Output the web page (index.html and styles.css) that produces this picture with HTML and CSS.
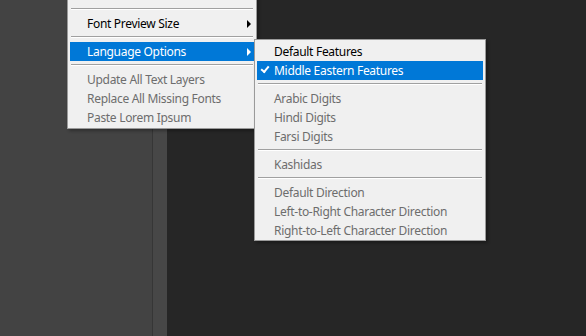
FILE: index.html
```html
<!DOCTYPE html>
<html>
  <head>
    <title>Type Menu</title>
    <meta charset="utf-8">
    <link rel="stylesheet" href="styles.css">
  </head>
  <body>
    <div class="desk">
      <div class="panel"></div>
      <div class="strip"></div>
      <div class="canvas"></div>
    </div>

    <!-- Type menu, scrolled so only the lower part shows -->
    <div class="menu" id="typeMenu">
      <div class="item">Match Font...</div>
      <div class="sep"></div>
      <div class="item">Font Preview Size<span class="arrow"></span></div>
      <div class="sep"></div>
      <div class="item active">Language Options<span class="arrow"></span></div>
      <div class="sep"></div>
      <div class="item off">Update All Text Layers</div>
      <div class="item off">Replace All Missing Fonts</div>
      <div class="item off">Paste Lorem Ipsum</div>
    </div>

    <!-- Language Options submenu -->
    <div class="menu" id="langMenu">
      <div class="item">Default Features</div>
      <div class="item active checked">Middle Eastern Features</div>
      <div class="sep"></div>
      <div class="item off">Arabic Digits</div>
      <div class="item off">Hindi Digits</div>
      <div class="item off">Farsi Digits</div>
      <div class="sep"></div>
      <div class="item off">Kashidas</div>
      <div class="sep"></div>
      <div class="item off">Default Direction</div>
      <div class="item off">Left-to-Right Character Direction</div>
      <div class="item off">Right-to-Left Character Direction</div>
    </div>
  </body>
</html>
```

FILE: styles.css
```css
body {
  margin: 0;
  background: #262626;
  font: 12px/19px 'Segoe UI', 'Noto Sans', sans-serif;
  letter-spacing: -0.3px;
  overflow: hidden;
}

.desk {
  display: flex;
  height: 336px;
}

.panel {
  width: 152px;
  background: #434343;
  border-right: 1px solid #363636;
}

.strip {
  width: 14px;
  background: #474747;
}

.canvas {
  flex: 1;
  background: #262626;
}

.menu {
  position: absolute;
  background: #f0f0f0;
  border: 1px solid #9a9a9a;
  padding: 2px;
  box-shadow: 2px 2px 3px rgba(0, 0, 0, 0.3);
  color: #000;
}

#typeMenu {
  left: 67px;
  top: -17px;
  width: 184px;
  padding-bottom: 1px;
}

#langMenu {
  left: 254px;
  top: 39px;
  width: 226px;
  padding-bottom: 0;
}

.item {
  position: relative;
  height: 19px;
  padding-left: 17px;
  white-space: nowrap;
}

.item.off {
  color: #6d6d6d;
}

.item.active {
  background: #0078d7;
  color: #fff;
}

.checked::before {
  content: "";
  position: absolute;
  left: 4px;
  top: 5px;
  width: 6px;
  height: 3px;
  border-left: 2px solid #fff;
  border-bottom: 2px solid #fff;
  transform: rotate(-50deg);
}

.arrow {
  position: absolute;
  right: 3px;
  top: 6px;
  border-left: 4px solid #000;
  border-top: 4px solid transparent;
  border-bottom: 4px solid transparent;
}

.active .arrow {
  border-left-color: #fff;
}

.sep {
  height: 9px;
  box-sizing: border-box;
  padding-top: 3px;
}

.sep::after {
  content: "";
  display: block;
  margin: 0 1px;
  border-top: 1px solid #a0a0a0;
  border-bottom: 1px solid #fff;
}
```
